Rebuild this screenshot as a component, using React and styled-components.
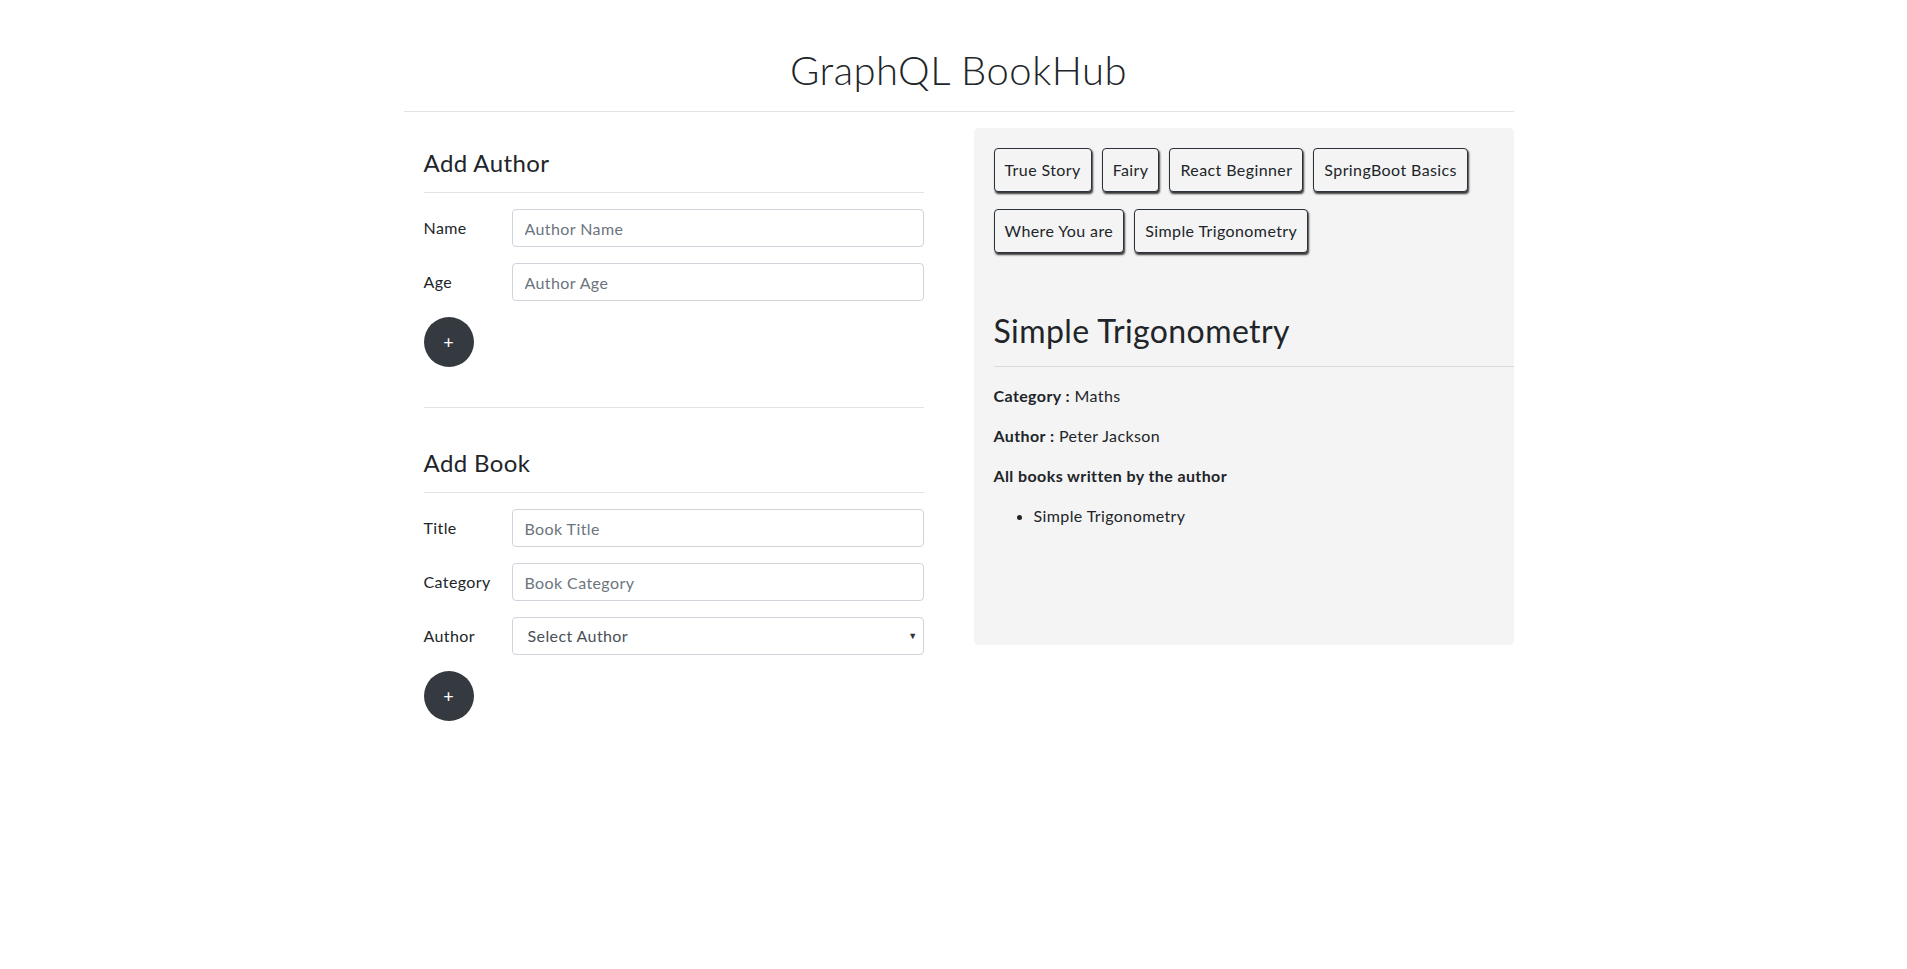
import React from "react";
import styled, { createGlobalStyle } from "styled-components";

const GlobalStyle = createGlobalStyle`
  html, body { margin: 0; padding: 0; background: #fff; }
  body {
    font-family: "Lato", "Noto Sans", sans-serif;
    font-size: 16px;
    line-height: 24px;
    letter-spacing: 0.025em;
    color: #212529;
  }
  * { box-sizing: border-box; }
`;

const Container = styled.div`
  width: 1110px;
  margin-left: calc(50% - 550px);
`;

const Header = styled.header`
  padding: 46px 0 17px;
  border-bottom: 1px solid #e3e3e3;
`;

const Title = styled.h1`
  margin: 0;
  text-align: center;
  font-size: 40px;
  line-height: 48px;
  font-weight: 300;
  letter-spacing: 0.012em;
  color: #212529;
`;

const Main = styled.main`
  display: grid;
  grid-template-columns: 540px 540px;
  column-gap: 30px;
  margin-top: 16px;
  align-items: start;
`;

const LeftCol = styled.section`
  padding: 20px;
`;

const FormBlock = styled.form`
  display: flex;
  flex-direction: column;
  margin-top: ${(p) => p.$mt || 0}px;
`;

const SectionTitle = styled.h4`
  margin: 0;
  font-size: 24px;
  line-height: 29px;
  font-weight: 400;
  color: #212529;
`;

const Rule = styled.hr`
  border: 0;
  border-top: 1px solid #e3e3e3;
  margin: ${(p) => p.$m || "15px 0 16px"};
`;

const FieldRow = styled.div`
  display: grid;
  grid-template-columns: 88px 1fr;
  align-items: center;
  margin-bottom: 16px;
`;

const Label = styled.label`
  font-size: 16px;
  color: #212529;
`;

const TextInput = styled.input`
  height: 38px;
  width: 100%;
  padding: 6px 12px;
  font: inherit;
  font-size: 16px;
  letter-spacing: 0.025em;
  color: #495057;
  border: 1px solid #ced4da;
  border-radius: 4px;
  background: #fff;
  outline: none;
  &::placeholder { color: #6c757d; }
`;

const SelectWrap = styled.div`
  position: relative;
`;

const Select = styled.select`
  height: 38px;
  width: 100%;
  padding: 6px 12px 6px 15px;
  font: inherit;
  font-size: 16px;
  letter-spacing: 0.025em;
  color: #495057;
  border: 1px solid #ced4da;
  border-radius: 4px;
  background: #fff;
  appearance: none;
  outline: none;
`;

const Caret = styled.span`
  position: absolute;
  right: 6px;
  top: 50%;
  transform: translateY(-50%);
  font-size: 9px;
  color: #333;
  pointer-events: none;
`;

const RoundButton = styled.button`
  width: 50px;
  height: 50px;
  border-radius: 50%;
  border: none;
  background: #343a40;
  color: #fff;
  font: inherit;
  font-size: 18px;
  display: flex;
  align-items: center;
  justify-content: center;
  padding: 0;
  cursor: pointer;
`;

const Panel = styled.section`
  background: #f4f4f4;
  border-radius: 5px;
  padding: 20px;
  min-height: 517px;
`;

const BookList = styled.ul`
  list-style: none;
  margin: 0;
  padding: 0;
  display: flex;
  flex-wrap: wrap;
  gap: 17px 10px;
`;

const BookButton = styled.li`
  border: 1px solid #2b3138;
  border-radius: 4px;
  padding: 9px 10px;
  font-size: 16px;
  line-height: 24px;
  color: #212529;
  box-shadow: 1px 2px 2px rgba(20, 20, 20, 0.85);
  cursor: pointer;
  background: #f4f4f4;
`;

const Details = styled.div`
  margin-top: 59px;
  margin-right: -20px;
`;

const BookTitle = styled.h2`
  margin: 0;
  font-size: 32px;
  line-height: 38px;
  font-weight: 400;
  color: #212529;
`;

const DetailsRule = styled.hr`
  border: 0;
  border-top: 1px solid #dadada;
  margin: 16px 0 17px;
`;

const Para = styled.p`
  margin: 0 0 16px;
  margin-right: 20px;
`;

const Strong = styled.strong`
  font-weight: 700;
`;

const AuthorBooks = styled.ul`
  margin: 0;
  padding-left: 40px;
`;

const books = [
  "True Story",
  "Fairy",
  "React Beginner",
  "SpringBoot Basics",
  "Where You are",
  "Simple Trigonometry",
];

export default function App() {
  return (
    <>
      <GlobalStyle />
      <Container>
        <Header>
          <Title>GraphQL BookHub</Title>
        </Header>
        <Main>
          <LeftCol>
            <FormBlock>
              <SectionTitle>Add Author</SectionTitle>
              <Rule />
              <FieldRow>
                <Label>Name</Label>
                <TextInput placeholder="Author Name" />
              </FieldRow>
              <FieldRow>
                <Label>Age</Label>
                <TextInput placeholder="Author Age" />
              </FieldRow>
              <RoundButton type="button">+</RoundButton>
            </FormBlock>
            <Rule $m="40px 0 0" />
            <FormBlock $mt={40}>
              <SectionTitle>Add Book</SectionTitle>
              <Rule />
              <FieldRow>
                <Label>Title</Label>
                <TextInput placeholder="Book Title" />
              </FieldRow>
              <FieldRow>
                <Label>Category</Label>
                <TextInput placeholder="Book Category" />
              </FieldRow>
              <FieldRow>
                <Label>Author</Label>
                <SelectWrap>
                  <Select defaultValue="">
                    <option value="">Select Author</option>
                  </Select>
                  <Caret>▼</Caret>
                </SelectWrap>
              </FieldRow>
              <RoundButton type="button">+</RoundButton>
            </FormBlock>
          </LeftCol>
          <Panel>
            <BookList>
              {books.map((b) => (
                <BookButton key={b}>{b}</BookButton>
              ))}
            </BookList>
            <Details>
              <BookTitle>Simple Trigonometry</BookTitle>
              <DetailsRule />
              <Para>
                <Strong>Category :</Strong> Maths
              </Para>
              <Para>
                <Strong>Author :</Strong> Peter Jackson
              </Para>
              <Para>
                <Strong>All books written by the author</Strong>
              </Para>
              <AuthorBooks>
                <li>Simple Trigonometry</li>
              </AuthorBooks>
            </Details>
          </Panel>
        </Main>
      </Container>
    </>
  );
}
